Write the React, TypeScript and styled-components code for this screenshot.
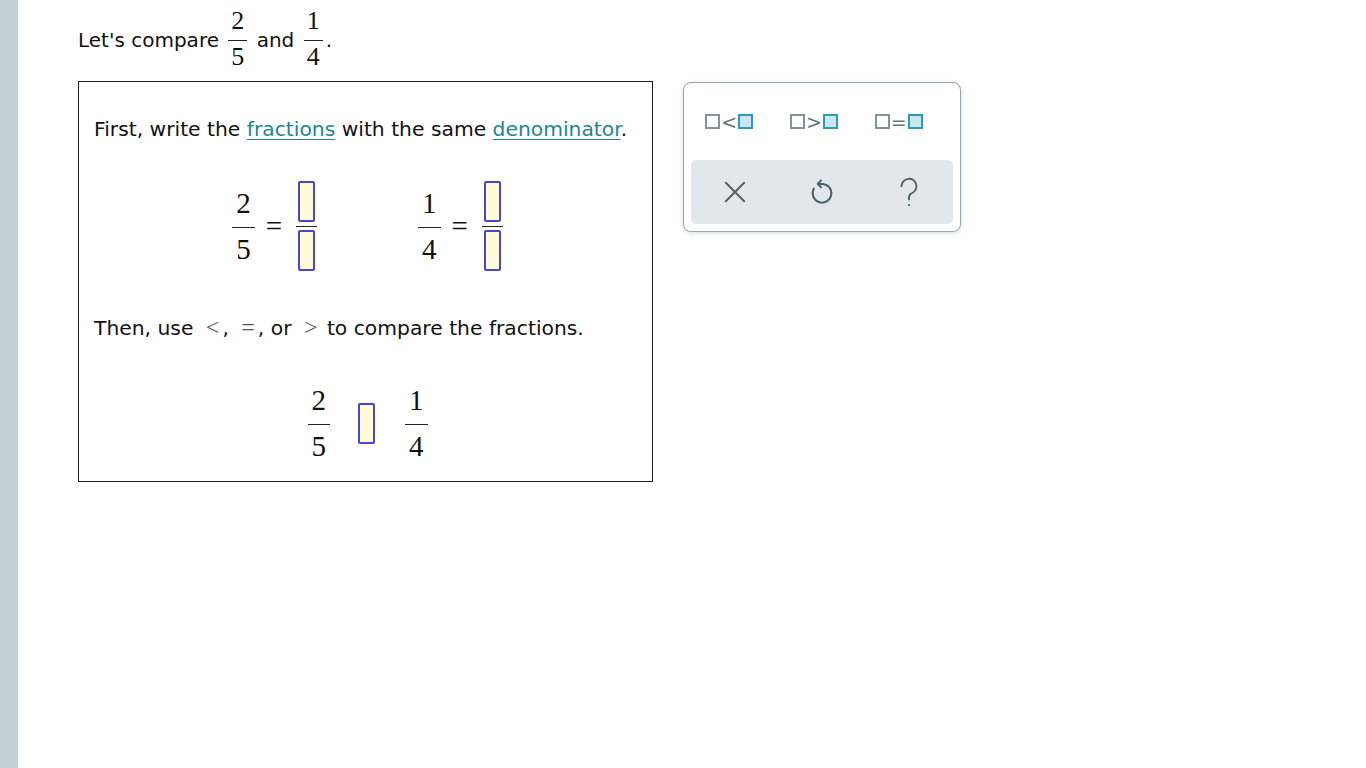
import React from "react";
import styled, { createGlobalStyle } from "styled-components";

const Global = createGlobalStyle`
  html, body { margin: 0; padding: 0; background: #fff; }
  body {
    font-family: "DejaVu Sans", Verdana, sans-serif;
    font-size: 20.3px;
    color: #111;
  }
`;

const Page = styled.div`
  display: flex;
  min-height: 100vh;
`;

const Sidebar = styled.div`
  width: 18px;
  flex: none;
  background: #c4cfd6;
  min-height: 100vh;
`;

const Main = styled.main`
  flex: 1;
  padding-left: 60px;
`;

const Intro = styled.div`
  margin-top: 8px;
  font-size: 20px;
  line-height: 24px;
  white-space: nowrap;
`;

type FracStyle = { $size: number; $up: number; $down: number; $pad: number; $margin: number; $raise: number };

const FracWrap = styled.span<FracStyle>`
  display: inline-flex;
  flex-direction: column;
  align-items: stretch;
  vertical-align: ${(p) => (p.$raise ? `${p.$raise}px` : "baseline")};
  margin: 0 ${(p) => p.$margin}px;
  font-family: "Liberation Serif", "Times New Roman", serif;
  font-size: ${(p) => p.$size}px;
  line-height: ${(p) => p.$size}px;
  text-align: center;
  color: #111;
  & > .num {
    padding: 0 ${(p) => p.$pad}px ${(p) => p.$up}px;
  }
  & > .den {
    padding: ${(p) => p.$down}px ${(p) => p.$pad}px 0;
  }
`;

const FracBar = styled.span`
  display: block;
  height: 0;
  border-top: 1px solid #222;
`;

const Frac = ({
  n,
  d,
  size = 29,
  up = 9,
  down = 7,
  pad = 4,
  margin = 0,
  raise = 0,
}: {
  n: number;
  d: number;
  size?: number;
  up?: number;
  down?: number;
  pad?: number;
  margin?: number;
  raise?: number;
}) => (
  <FracWrap $size={size} $up={up} $down={down} $pad={pad} $margin={margin} $raise={raise}>
    <span className="num">{n}</span>
    <FracBar />
    <span className="den">{d}</span>
  </FracWrap>
);

const Workspace = styled.div`
  display: flex;
  align-items: flex-start;
  gap: 30px;
  margin-top: 11px;
`;

const Card = styled.section`
  width: 575px;
  box-sizing: border-box;
  border: 1px solid #1e1e1e;
  padding: 35px 15px 20px;
  display: flex;
  flex-direction: column;
`;

const Line = styled.p<{ $top?: number }>`
  margin: ${(p) => p.$top ?? 0}px 0 0;
  line-height: 24px;
  white-space: nowrap;
`;

const Term = styled.a`
  color: #1f8590;
  text-decoration: underline;
  text-underline-offset: 3px;
  text-decoration-thickness: 1px;
`;

const Sym = styled.span`
  font-family: "Liberation Serif", "Times New Roman", serif;
  font-size: 24px;
  color: #555;
  margin: 0 3px 0 6px;
`;

const EqRow = styled.div<{ $top: number }>`
  display: flex;
  align-items: center;
  justify-content: center;
  margin-top: ${(p) => p.$top}px;
  padding-left: 4px;
`;

const Group = styled.div`
  display: flex;
  align-items: center;
`;

const Spacer = styled.div<{ $w: number }>`
  width: ${(p) => p.$w}px;
  flex: none;
`;

const Equals = styled.span`
  font-family: "Liberation Serif", "Times New Roman", serif;
  font-size: 29px;
  line-height: 28px;
  color: #111;
  margin: 0 14px 0 11px;
`;

const Blank = styled.span`
  display: block;
  width: 17px;
  height: 41px;
  box-sizing: border-box;
  border: 2px solid #4646d2;
  border-radius: 2px;
  background: #fffbd8;
`;

const InputFrac = styled.span`
  display: flex;
  flex-direction: column;
  align-items: center;
  & > ${FracBar} {
    width: 21px;
    margin: 4px 0 3px;
  }
`;

const Palette = styled.aside`
  width: 278px;
  height: 150px;
  box-sizing: border-box;
  margin-top: 1px;
  border: 1px solid #94a7b0;
  border-radius: 8px;
  box-shadow: 0 1px 4px rgba(40, 60, 70, 0.2);
  padding: 0 7px 7px;
  display: flex;
  flex-direction: column;
  background: #fff;
`;

const SymbolRow = styled.div`
  height: 77px;
  display: grid;
  grid-template-columns: repeat(3, 1fr);
  align-items: center;
  justify-items: center;
  margin: 0 12px 0 -4px;
`;

const SymButton = styled.button`
  display: inline-flex;
  align-items: center;
  gap: 1px;
  border: none;
  background: transparent;
  padding: 0;
  font-family: "DejaVu Sans", Verdana, sans-serif;
  font-size: 19px;
  color: #66757d;
  line-height: 20px;
  cursor: pointer;
`;

const Sq = styled.span<{ $on?: boolean }>`
  width: 15px;
  height: 15px;
  box-sizing: border-box;
  border: 2px solid ${(p) => (p.$on ? "#2a9db6" : "#84929a")};
  background: ${(p) => (p.$on ? "#cbe7ef" : "#fff")};
`;

const ActionPanel = styled.div`
  flex: 1;
  background: #e1e7ea;
  border-radius: 5px;
  display: grid;
  grid-template-columns: repeat(3, 1fr);
  align-items: center;
  justify-items: center;
`;

const ActionButton = styled.button`
  border: none;
  background: transparent;
  padding: 0;
  width: 36px;
  height: 36px;
  display: flex;
  align-items: center;
  justify-content: center;
  color: #4b626e;
  cursor: pointer;
`;

const XIcon = () => (
  <svg width="26" height="26" viewBox="0 0 24 24" fill="none" stroke="currentColor" strokeWidth="1.8" strokeLinecap="round">
    <path d="M3.5 3.5 L20.5 20.5 M20.5 3.5 L3.5 20.5" />
  </svg>
);

const UndoIcon = () => (
  <svg width="30" height="30" viewBox="0 0 24 24" fill="none" stroke="currentColor" strokeWidth="1.6" strokeLinecap="round" strokeLinejoin="round">
    <path d="M9 5.5 h3 a7.5 7.5 0 1 1 -6.5 3.75" />
    <path d="M11.2 2.8 L8.5 5.5 L11.2 8.2" />
  </svg>
);

const HelpIcon = () => (
  <svg width="30" height="35" viewBox="0 0 24 28" fill="none" stroke="currentColor" strokeWidth="1.5" strokeLinecap="round" strokeLinejoin="round">
    <path d="M6 9 a6 6 0 1 1 8.2 5.6 c-1.4 .6 -2.2 1.7 -2.2 3.2 v1.8" />
    <circle cx="12" cy="24" r="0.9" fill="currentColor" stroke="none" />
  </svg>
);

const symbols = ["<", ">", "="];

export default function App() {
  return (
    <>
      <Global />
      <Page>
        <Sidebar />
        <Main>
          <Intro>
            Let's compare <Frac n={2} d={5} size={26} up={6} down={3} pad={3} margin={3} raise={18} /> and{" "}
            <Frac n={1} d={4} size={26} up={6} down={3} pad={3} margin={3} raise={18} />.
          </Intro>
          <Workspace>
            <Card>
              <Line>
                First, write the <Term>fractions</Term> with the same <Term>denominator</Term>.
              </Line>
              <EqRow $top={40}>
                <Group>
                  <Frac n={2} d={5} />
                  <Equals>=</Equals>
                  <InputFrac>
                    <Blank />
                    <FracBar />
                    <Blank />
                  </InputFrac>
                </Group>
                <Spacer $w={101} />
                <Group>
                  <Frac n={1} d={4} />
                  <Equals>=</Equals>
                  <InputFrac>
                    <Blank />
                    <FracBar />
                    <Blank />
                  </InputFrac>
                </Group>
              </EqRow>
              <Line $top={44}>
                Then, use <Sym>&lt;</Sym>, <Sym>=</Sym>, or <Sym>&gt;</Sym> to compare the fractions.
              </Line>
              <EqRow $top={46}>
                <Frac n={2} d={5} />
                <Spacer $w={28} />
                <Blank />
                <Spacer $w={30} />
                <Frac n={1} d={4} />
              </EqRow>
            </Card>
            <Palette>
              <SymbolRow>
                {symbols.map((s) => (
                  <SymButton key={s}>
                    <Sq />
                    {s}
                    <Sq $on />
                  </SymButton>
                ))}
              </SymbolRow>
              <ActionPanel>
                <ActionButton aria-label="clear">
                  <XIcon />
                </ActionButton>
                <ActionButton aria-label="undo">
                  <UndoIcon />
                </ActionButton>
                <ActionButton aria-label="help">
                  <HelpIcon />
                </ActionButton>
              </ActionPanel>
            </Palette>
          </Workspace>
        </Main>
      </Page>
    </>
  );
}
